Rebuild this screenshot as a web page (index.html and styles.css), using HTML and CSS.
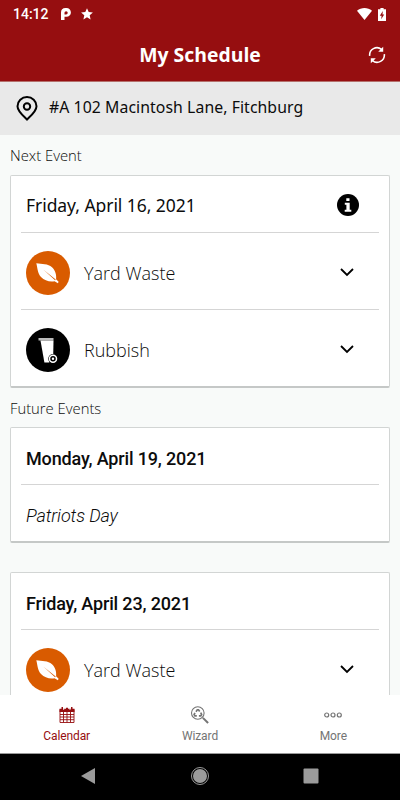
FILE: index.html
```html
<!DOCTYPE html>
<html lang="en">
<head>
  <meta charset="UTF-8" />
  <meta name="viewport" content="width=device-width, initial-scale=1.0"/>
  <title>My Schedule</title>
  <link rel="stylesheet" href="styles.css">
</head>
<body>
  <svg class="symbols" aria-hidden="true">
    <symbol id="leaf" viewBox="0 0 44 44">
      <circle cx="22" cy="22" r="22" fill="#d95b00"/>
      <path d="M10.300 12.200C16 13.200 22 12.500 26 16.200c3.600 3.400 4.600 7.800 4.100 12L32.600 30.800l-.7 1.500-3.400-2.100C23.500 31 18.500 29.700 15 26 11.300 22 11.600 16.500 10.300 12.200z" fill="#fff"/>
      <path d="M17.500 18.800l12.200 9.800-.6.700z" fill="#d95b00"/>
    </symbol>
    <symbol id="bin" viewBox="0 0 44 44">
      <circle cx="22" cy="22" r="22" fill="#000"/>
      <path d="M12.500 10h15v2.500h-15z" fill="#bbb"/>
      <path d="M14.500 12.500h13l-.3 16-4 6h-4.800z" fill="#fff"/>
      <circle cx="27" cy="30.800" r="4.800" fill="#000"/>
      <circle cx="27" cy="30.800" r="3.500" fill="none" stroke="#fff" stroke-width="1.500"/>
      <circle cx="27" cy="30.800" r="1.200" fill="#fff"/>
    </symbol>
    <symbol id="chevron" viewBox="0 0 14 9">
      <path d="M1 1l6 6 6-6" fill="none" stroke="#000" stroke-width="1.800"/>
    </symbol>
  </svg>

  <div class="app">
    <div class="status-bar">
      <span class="time">14:12</span>
      <svg class="p-icon" viewBox="0 0 10 12"><path d="M0 4.500Q0 0 4.500 0h1a4.300 4.300 0 0 1 0 8.800H3.500V12H0z" fill="#fff"/><path d="M3.500 4.800a1.600 1.600 0 1 1 1.600 1.600H3.500z" fill="#960e10"/></svg>
      <svg class="star-icon" viewBox="0 0 12 12"><path d="M6 .2l1.700 3.900 4.200.4-3.200 2.800.9 4.200L6 9.300l-3.600 2.200.9-4.200L.1 4.500l4.200-.4z" fill="#fff"/></svg>
      <svg class="wifi-icon" viewBox="0 0 15 12"><path d="M0 2.700C4.200-.9 10.800-.9 15 2.700L7.500 12z" fill="#fff"/></svg>
      <svg class="battery-icon" viewBox="0 0 8 13"><path d="M2.400 0h3.200v1.300H8V13H0V1.300h2.400z" fill="#fff"/><path d="M4.800 3L1.800 7.700h1.800L3.200 11.300l3-4.800H4.500z" fill="#960e10"/></svg>
    </div>

    <header>
      <h1>My Schedule</h1>
      <svg class="refresh-icon" viewBox="0 0 18 18">
        <path d="M1.700 9.800A7.300 7.300 0 0 1 13.500 3.300M16.300 8.200A7.300 7.300 0 0 1 4.500 14.700" fill="none" stroke="#fff" stroke-width="1.600"/>
        <path d="M15.200.7v5h-5zM2.800 17.300v-5h5z" fill="#fff"/>
      </svg>
    </header>

    <div class="address">
      <svg class="pin-icon" viewBox="0 0 22 25"><path d="M11 23.500C7.500 20 1.500 15.500 1.500 10.300a9.500 9.200 0 0 1 19 0c0 5.200-6 9.700-9.500 13.200z" fill="none" stroke="#000" stroke-width="2"/><circle cx="11" cy="10.500" r="3.200" fill="none" stroke="#000" stroke-width="2"/></svg>
      <span>#A 102 Macintosh Lane, Fitchburg</span>
    </div>

    <main>
      <h2>Next Event</h2>
      <section class="card">
        <div class="card-head next">
          <span>Friday, April 16, 2021</span>
          <svg class="info-icon" viewBox="0 0 22 22"><circle cx="11" cy="11" r="11" fill="#000"/><path d="M9.300 4.300h3.200v2.700H9.300zM7.800 8.700h4.900v7h1.600v2H7.700v-2h1.700v-5H7.800z" fill="#fff"/></svg>
        </div>
        <div class="event">
          <svg class="event-icon"><use href="#leaf"/></svg>
          <span>Yard Waste</span>
          <svg class="chevron"><use href="#chevron"/></svg>
        </div>
        <div class="event">
          <svg class="event-icon"><use href="#bin"/></svg>
          <span>Rubbish</span>
          <svg class="chevron"><use href="#chevron"/></svg>
        </div>
      </section>

      <h2 class="future">Future Events</h2>
      <section class="card">
        <div class="card-head"><span>Monday, April 19, 2021</span></div>
        <div class="holiday">Patriots Day</div>
      </section>

      <section class="card">
        <div class="card-head"><span>Friday, April 23, 2021</span></div>
        <div class="event">
          <svg class="event-icon"><use href="#leaf"/></svg>
          <span>Yard Waste</span>
          <svg class="chevron"><use href="#chevron"/></svg>
        </div>
      </section>
    </main>

    <nav class="tabs">
      <div class="tab active">
        <svg viewBox="0 0 20 18"><path d="M3 3.500v13h14v-13M3 8.500h14M3 11h14M3 13.700h14M6.500 6v10.500M10 6v10.500M13.500 6v10.500" fill="none" stroke="currentColor" stroke-width=".9"/><path d="M2.500 2.800h2v-1.800h1.500v1.800h3v-1h2v1h3v-1.800h1.500v1.800h2v3.200h-15z" fill="currentColor"/><path d="M6.700 1v3M13 1v3" stroke="#fff" stroke-width=".8"/></svg>
        <span>Calendar</span>
      </div>
      <div class="tab">
        <svg viewBox="0 0 20 18"><circle cx="7.800" cy="7" r="6.300" fill="none" stroke="currentColor" stroke-width="1.100"/><path d="M6 5.700L7.300 3.800h1.200l1.200 1.700M10.700 6.700l.9 1.700-.8 1.400H8.900M6.800 9.800H4.900L4.100 8.400l.9-1.600" fill="none" stroke="currentColor" stroke-width="1.700"/><path d="M12.900 11.900l5.200 5.100" stroke="currentColor" stroke-width="2"/></svg>
        <span>Wizard</span>
      </div>
      <div class="tab">
        <svg viewBox="0 0 20 18"><g fill="none" stroke="currentColor" stroke-width="1.200"><circle cx="3.700" cy="9" r="2"/><circle cx="10" cy="9" r="2"/><circle cx="16.300" cy="9" r="2"/></g></svg>
        <span>More</span>
      </div>
    </nav>

    <div class="system-nav">
      <svg viewBox="0 0 20 20"><path d="M17 2v16L3 10z" fill="#9b9b9b"/></svg>
      <svg viewBox="0 0 20 20"><circle cx="10" cy="10" r="8.500" fill="none" stroke="#9b9b9b"/><circle cx="10" cy="10" r="7" fill="#9b9b9b"/></svg>
      <svg viewBox="0 0 20 20"><rect x="2.500" y="2.500" width="15" height="15" rx="1" fill="#9b9b9b"/></svg>
    </div>
  </div>
</body>
</html>
```

FILE: styles.css
```css
* {
  box-sizing: border-box;
}
body {
  margin: 0;
  font-family: 'Open Sans', 'Noto Sans', sans-serif;
  background: #f8faf9;
  color: #0c0c0c;
}
svg {
  display: block;
  flex: none;
}
.symbols {
  display: none;
}
.app {
  display: flex;
  flex-direction: column;
  width: 400px;
  height: 800px;
  overflow: hidden;
}
.status-bar {
  display: flex;
  align-items: center;
  height: 28px;
  flex: none;
  padding: 0 14px 0 13px;
  background: #960e10;
  color: #fff;
}
.time {
  width: 48px;
  font: 500 14px Roboto, sans-serif;
}
.p-icon {
  width: 10px;
  height: 12px;
}
.star-icon {
  width: 12px;
  height: 12px;
  margin-left: 10px;
}
.wifi-icon {
  width: 15px;
  height: 12px;
  margin-left: auto;
}
.battery-icon {
  width: 8px;
  height: 13px;
  margin-left: 6px;
}
header {
  display: flex;
  align-items: center;
  height: 54px;
  flex: none;
  padding: 0 14px 0 32px;
  background: #960e10;
  border-bottom: 1px solid #b5706c;
  color: #fff;
}
h1 {
  flex: 1;
  margin: 0;
  font-size: 19.400px;
  font-weight: 700;
  line-height: 53px;
  text-align: center;
}
.refresh-icon {
  width: 18px;
  height: 18px;
}
.address {
  display: flex;
  align-items: center;
  height: 53px;
  flex: none;
  padding-left: 16px;
  gap: 11px;
  background: #e9e9e9;
  font: 400 15.800px 'Noto Sans', sans-serif;
  letter-spacing: .07px;
}
.address span {
  padding-bottom: 3px;
}
.pin-icon {
  width: 22px;
  height: 25px;
}
main {
  flex: 1;
  min-height: 0;
  overflow: hidden;
  padding: 0 10px;
}
h2 {
  margin: 0;
  height: 40px;
  font-size: 14.800px;
  font-weight: 300;
  line-height: 40px;
}
h2.future {
  margin-top: -1px;
  line-height: 42px;
}
.card {
  margin-bottom: 29px;
  padding: 0 10px;
  background: #fff;
  border: 1px solid #d2d5d4;
  border-bottom: 2px solid #c5c8c7;
  border-radius: 2px;
}
.card:has(+ h2) {
  margin-bottom: 0;
}
.card-head {
  display: flex;
  align-items: center;
  justify-content: space-between;
  height: 57px;
  padding: 5px 20px 0 5px;
  border-bottom: 1px solid #d5d5d5;
  font: 500 18px Roboto, sans-serif;
  letter-spacing: -.15px;
}
.card-head.next {
  padding-top: 2px;
  font: 400 17.500px 'Noto Sans', sans-serif;
  letter-spacing: -.06px;
}
.info-icon {
  width: 22px;
  height: 22px;
}
.event {
  display: flex;
  align-items: center;
  height: 76px;
  padding: 3px 25px 0 5px;
  font-size: 18px;
  font-weight: 330;
}
.event + .event {
  height: 77px;
  border-top: 1px solid #d5d5d5;
}
.event-icon {
  width: 44px;
  height: 44px;
  margin-right: 14px;
}
.chevron {
  width: 14px;
  height: 9px;
  margin-left: auto;
}
.holiday {
  height: 56px;
  padding: 3px 5px 0;
  font: italic 300 18px/56px Roboto, sans-serif;
  letter-spacing: -.1px;
}
.tabs {
  display: flex;
  height: 59px;
  flex: none;
  background: #fff;
  border-bottom: 1px solid #999;
}
.tab {
  flex: 1;
  display: flex;
  flex-direction: column;
  align-items: center;
  padding-top: 11px;
  gap: 4px;
  color: #747474;
  font: 400 12px/17px Roboto, sans-serif;
  letter-spacing: -.1px;
}
.tab svg {
  width: 20px;
  height: 18px;
}
.tab.active {
  color: #960e10;
}
.system-nav {
  display: flex;
  justify-content: space-between;
  height: 46px;
  flex: none;
  padding: 12px 79px 0 78px;
  background: #000;
}
.system-nav svg {
  width: 20px;
  height: 20px;
}
```
